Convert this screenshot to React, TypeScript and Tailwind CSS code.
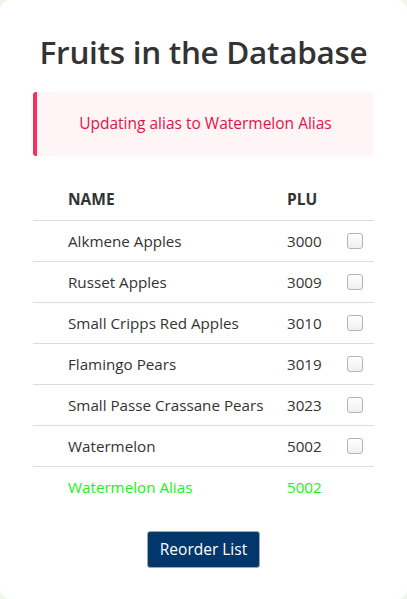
import React from "react";

const fruits = [
  { name: "Alkmene Apples", plu: 3000 },
  { name: "Russet Apples", plu: 3009 },
  { name: "Small Cripps Red Apples", plu: 3010 },
  { name: "Flamingo Pears", plu: 3019 },
  { name: "Small Passe Crassane Pears", plu: 3023 },
  { name: "Watermelon", plu: 5002 },
];

export default function App() {
  return (
    <div
      className="min-h-[599px] w-[407px] bg-[#f1f7e6] text-[#333]"
      style={{ fontFamily: '"Open Sans", "Noto Sans", sans-serif' }}
    >
      <div className="h-[599px] rounded-[10px] bg-white px-[33px] pt-[30px]">
        <h1 className="text-center text-[31.5px] font-semibold leading-[44px] tracking-[-0.3px] text-[#333]">
          Fruits in the Database
        </h1>

        <div className="mt-[18px] flex h-[64px] items-center justify-center rounded-r-[5px] rounded-l-[3px] border-l-4 border-[#f4335b] bg-[#fff4f6] text-[15.5px] text-[#e2134b]">
          Updating alias to Watermelon Alias
        </div>

        <div className="mt-[24px]">
          <div className="grid h-[41px] grid-cols-[35px_219px_60px_1fr] items-center border-b border-[#dcdcdc] text-[15.5px] font-bold">
            <span />
            <span>NAME</span>
            <span>PLU</span>
            <span />
          </div>
          {fruits.map((f) => (
            <div
              key={f.name}
              className="grid h-[41px] grid-cols-[35px_219px_60px_1fr] items-center border-b border-[#dcdcdc] text-[15.2px]"
            >
              <span />
              <span>{f.name}</span>
              <span>{f.plu}</span>
              <span className="flex">
                <span className="h-[16px] w-[16px] rounded-[3px] border border-[#b9b3ad] bg-gradient-to-b from-white to-[#efefef]" />
              </span>
            </div>
          ))}
          <div className="grid h-[41px] grid-cols-[35px_219px_60px_1fr] items-center text-[15.2px] text-[#14f514]">
            <span />
            <span>Watermelon Alias</span>
            <span>5002</span>
            <span />
          </div>
        </div>

        <div className="mt-[23px] flex justify-center">
          <button className="h-[37px] rounded-[3px] border border-[#9aa9b8] bg-[#01376a] px-[12px] text-[15.5px] text-white">
            Reorder List
          </button>
        </div>
      </div>
    </div>
  );
}
